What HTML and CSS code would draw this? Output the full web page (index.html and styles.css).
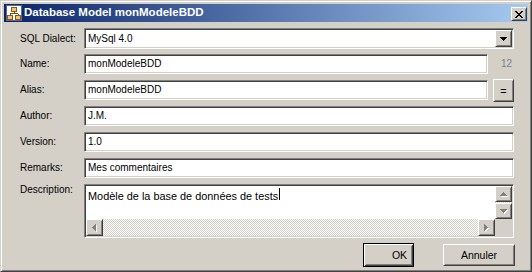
FILE: index.html
```html
<!DOCTYPE html>
<html lang="fr">
<head>
    <meta charset="UTF-8">
    <title>Database Model monModeleBDD</title>
    <link rel="stylesheet" href="styles.css">
</head>
<body>

<div class="window">
    <div class="titlebar">
        <svg class="app-icon" width="16" height="16" viewBox="0 0 16 16" shape-rendering="crispEdges">
            <rect x="0.5" y="0.5" width="15" height="15" fill="#fff" stroke="#5a6a8a"/>
            <path d="M8 7V9M4 8.5H12M4 8.5V11M12 8.5V11" stroke="#7a4a10" fill="none"/>
            <rect x="5.5" y="2.5" width="5" height="4" fill="#f2c27a" stroke="#8a5a1a"/>
            <rect x="1.5" y="10.5" width="5" height="4" fill="#f2c27a" stroke="#8a5a1a"/>
            <rect x="9.5" y="10.5" width="5" height="4" fill="#f2c27a" stroke="#8a5a1a"/>
        </svg>
        <span class="title">Database Model monModeleBDD</span>
        <span class="close-btn">
            <svg width="8" height="7" viewBox="0 0 8 7" shape-rendering="crispEdges">
                <path d="M0 0h2v1H0zM6 0h2v1H6zM1 1h2v1H1zM5 1h2v1H5zM2 2h4v1H2zM3 3h2v1H3zM2 4h4v1H2zM1 5h2v1H1zM5 5h2v1H5zM0 6h2v1H0zM6 6h2v1H6z" fill="#000"/>
            </svg>
        </span>
    </div>

    <div class="content">
        <div class="form">
            <label class="label first">SQL Dialect:</label>
            <div class="combo">
                <span class="combo-value">MySql 4.0</span>
                <span class="combo-btn">
                    <svg width="7" height="4" viewBox="0 0 7 4" shape-rendering="crispEdges">
                        <path d="M0 0h7v1H6v1H5v1H4v1H3V3H2V2H1V1H0z" fill="#000"/>
                    </svg>
                </span>
            </div>

            <label class="label">Name:</label>
            <div class="with-side">
                <div class="field">monModeleBDD</div>
                <span class="counter">12</span>
            </div>

            <label class="label">Alias:</label>
            <div class="with-side">
                <div class="field">monModeleBDD</div>
                <span class="side"><span class="eq-btn">=</span></span>
            </div>

            <label class="label">Author:</label>
            <div class="field">J.M.</div>

            <label class="label">Version:</label>
            <div class="field">1.0</div>

            <label class="label">Remarks:</label>
            <div class="field">Mes commentaires</div>

            <label class="label top">Description:</label>
            <div class="memo">
                <div class="memo-text">Modèle de la base de données de tests<span class="caret"></span></div>
                <div class="vscroll">
                    <span class="sb-btn">
                        <svg width="8" height="5" viewBox="0 0 8 5" shape-rendering="crispEdges">
                            <path d="M4 1h1v1h1v1h1v1h1v1H1V4h1V3h1V2h1z" fill="#fff"/>
                            <path d="M3 0h1v1h1v1h1v1h1v1H0V3h1V2h1V1h1z" fill="#808080"/>
                        </svg>
                    </span>
                    <span class="track"></span>
                    <span class="sb-btn">
                        <svg width="8" height="5" viewBox="0 0 8 5" shape-rendering="crispEdges">
                            <path d="M1 1h7v1H7v1H6v1H5v1H4V4H3V3H2V2H1z" fill="#fff"/>
                            <path d="M0 0h7v1H6v1H5v1H4v1H3V3H2V2H1V1H0z" fill="#808080"/>
                        </svg>
                    </span>
                </div>
                <div class="hscroll">
                    <span class="sb-btn">
                        <svg width="5" height="8" viewBox="0 0 5 8" shape-rendering="crispEdges">
                            <path d="M4 1h1v7H4V7H3V6H2V5H1V4h1V3h1V2h1z" fill="#fff"/>
                            <path d="M3 0h1v7H3V6H2V5H1V4H0V3h1V2h1V1h1z" fill="#808080"/>
                        </svg>
                    </span>
                    <span class="track"></span>
                    <span class="sb-btn">
                        <svg width="5" height="8" viewBox="0 0 5 8" shape-rendering="crispEdges">
                            <path d="M1 1h1v1h1v1h1v1h1v1H4v1H3v1H2v1H1z" fill="#fff"/>
                            <path d="M0 0h1v1h1v1h1v1h1v1H3v1H2v1H1v1H0z" fill="#808080"/>
                        </svg>
                    </span>
                </div>
                <div class="corner"></div>
            </div>
        </div>

        <div class="actions">
            <button class="btn btn-default">OK</button>
            <button class="btn btn-cancel">Annuler</button>
        </div>
    </div>
</div>

</body>
</html>
```

FILE: styles.css
```css
body {
    margin: 0;
    background-color: #d4d0c8;
    font-family: "Liberation Sans", Arial, sans-serif;
    font-size: 10px;
    color: #000;
}

/* window frame */
.window {
    width: 532px;
    height: 272px;
    box-sizing: border-box;
    padding: 3px;
    border: 1px solid;
    border-color: #d4d0c8 #404040 #404040 #d4d0c8;
    box-shadow: inset 1px 1px #fff, inset -1px -1px #808080;
    display: flex;
    flex-direction: column;
}
.titlebar {
    height: 18px;
    padding: 0 1px 0 2px;
    display: flex;
    align-items: flex-start;
    background: linear-gradient(to right, #0a246a, #a6caf0);
}
.app-icon {
    margin-top: 1px;
    flex: none;
}
.title {
    flex: 1;
    margin-left: 2px;
    color: #fff;
    font-weight: bold;
    font-size: 11.5px;
    line-height: 16px;
    white-space: nowrap;
}
.close-btn {
    margin-top: 3px;
    width: 16px;
    height: 14px;
    display: flex;
    align-items: center;
    justify-content: center;
}

/* raised 3d look */
.close-btn, .combo-btn, .eq-btn, .sb-btn, .btn {
    box-sizing: border-box;
    background-color: #d4d0c8;
    border: 1px solid;
    border-color: #fff #404040 #404040 #fff;
    box-shadow: inset 1px 1px #d4d0c8, inset -1px -1px #808080;
}

/* sunken 3d look */
.combo, .field, .memo {
    box-sizing: border-box;
    background-color: #fff;
    border: 1px solid;
    border-color: #808080 #fff #fff #808080;
    box-shadow: inset 1px 1px #404040, inset -1px -1px #d4d0c8;
}

.content {
    flex: 1;
    padding: 6px 14px 0 16px;
}
.form {
    display: grid;
    grid-template-columns: 64px 1fr;
    grid-template-rows: repeat(6, 26px) 54px;
}
.label {
    line-height: 20px;
    white-space: nowrap;
}
.label.first {
    line-height: 21px;
}
.label.top {
    line-height: 12px;
}

.combo {
    height: 21px;
    padding: 1px;
    display: flex;
}
.combo-value {
    flex: 1;
    padding: 1px 0 0 2px;
    line-height: 16px;
}
.combo-btn {
    width: 17px;
    height: 17px;
    display: flex;
    align-items: center;
    justify-content: center;
}

.field {
    height: 20px;
    padding: 2px 3px 0;
    line-height: 14px;
    white-space: nowrap;
}
.with-side {
    display: flex;
    align-items: flex-start;
}
.with-side .field {
    flex: 1;
}
.counter {
    width: 26px;
    padding-right: 2px;
    box-sizing: border-box;
    text-align: right;
    line-height: 20px;
    color: #808080;
}
.side {
    width: 26px;
    display: flex;
    justify-content: flex-end;
}
.eq-btn {
    width: 21px;
    height: 23px;
    margin-top: -1px;
    display: flex;
    align-items: center;
    justify-content: center;
    font-size: 11px;
}

/* description memo */
.memo {
    height: 54px;
    padding: 1px;
    display: grid;
    grid-template-columns: 1fr 17px;
    grid-template-rows: 1fr 17px;
}
.memo-text {
    padding: 2px 2px 0;
    font-size: 10.9px;
    line-height: 14px;
    white-space: nowrap;
    overflow: hidden;
}
.caret {
    display: inline-block;
    width: 1px;
    height: 12px;
    margin-left: 1px;
    background-color: #000;
}
.vscroll {
    display: flex;
    flex-direction: column;
}
.hscroll {
    display: flex;
}
.vscroll .sb-btn {
    height: 16px;
}
.hscroll .sb-btn {
    width: 17px;
}
.sb-btn {
    flex: none;
    display: flex;
    align-items: center;
    justify-content: center;
}
.track {
    flex: 1;
    background: repeating-conic-gradient(#fff 0% 25%, #d4d0c8 0% 50%) 0 0 / 2px 2px;
}
.corner {
    background-color: #d4d0c8;
}

/* dialog buttons */
.actions {
    display: flex;
    justify-content: flex-end;
    align-items: center;
    gap: 29px;
    padding-top: 5px;
    margin-right: -1px;
}
.btn {
    height: 22px;
    padding: 0;
    font-family: inherit;
    font-size: 10.5px;
    color: #000;
}
.btn-default {
    width: 51px;
    height: 24px;
    padding-left: 22px;
    border-color: #000;
    box-shadow: inset 1px 1px #fff, inset -1px -1px #404040, inset 2px 2px #d4d0c8, inset -2px -2px #808080;
}
.btn-cancel {
    width: 72px;
}
```
